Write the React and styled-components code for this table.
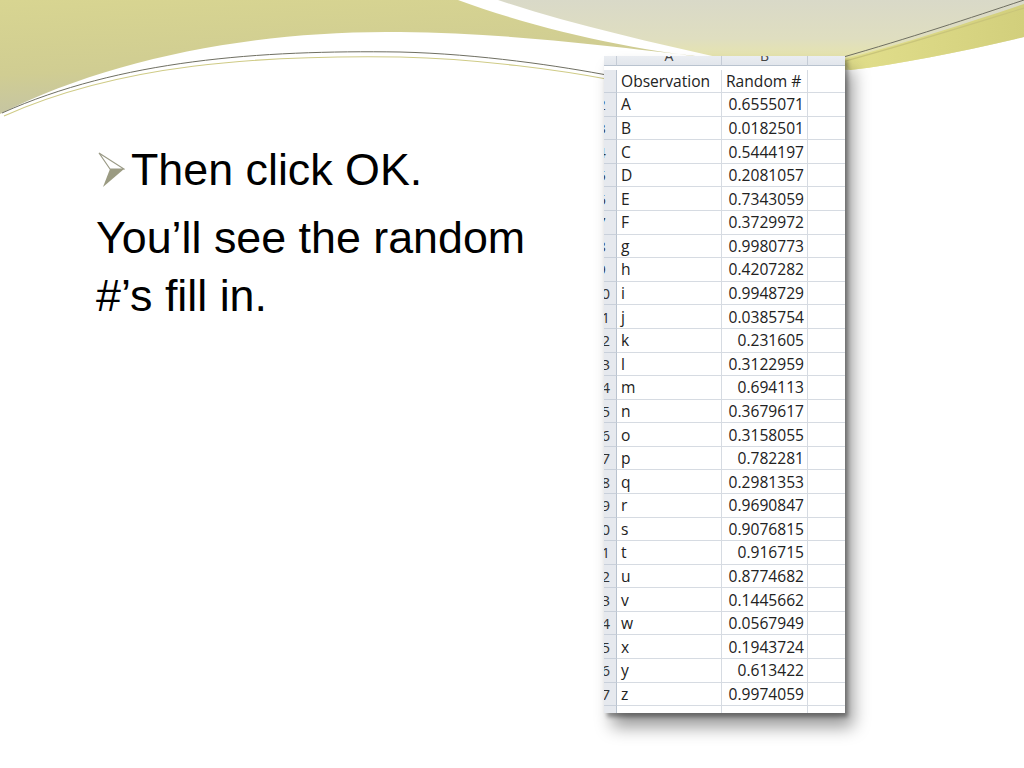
import React from 'react';
import styled, { createGlobalStyle } from 'styled-components';

const GlobalStyle = createGlobalStyle`
  body {
    margin: 0;
    background: #ffffff;
    font-family: "Liberation Sans", Arial, sans-serif;
  }
`;

// slide area, 1024x768
const Slide = styled.div`
  position: relative;
  width: 1024px;
  height: 768px;
  overflow: hidden;
  background: #ffffff;
`;

// decorative wave at the top of the slide (drawn, sits behind content)
const Backdrop = styled.svg`
  position: absolute;
  top: 0;
  left: 0;
  width: 1024px;
  height: 130px;
`;

const Content = styled.div`
  position: relative;
  z-index: 1;
  display: flex;
  height: 100%;
`;

const TextColumn = styled.div`
  flex: 0 0 604px;
  box-sizing: border-box;
  padding: 140px 0 0 96px;
  color: #000;
  font-size: 44.8px;
  line-height: 58px;
`;

const BulletLine = styled.div`
  display: flex;
  align-items: center;
`;

const Arrow = styled.svg`
  flex: 0 0 auto;
  width: 27px;
  height: 36px;
  margin: 2px 6px 0 2px;
`;

const Paragraph = styled.p`
  margin: 10px 0 0;
  width: 470px;
`;

const SheetColumn = styled.div`
  padding-top: 56px;
`;

// the pasted spreadsheet picture
const SheetFrame = styled.div`
  width: 241px;
  height: 657px;
  overflow: hidden;
  background: #ffffff;
  box-shadow: 8px 14px 16px rgba(0, 0, 0, 0.4), 3px 4px 4px rgba(0, 0, 0, 0.35);
`;

const Grid = styled.div`
  display: grid;
  grid-template-columns: 30px 105px 86px 64px;
  grid-auto-rows: 23.58px;
  margin: -10px 0 0 -17px;
  font-family: "Open Sans", "DejaVu Sans", sans-serif;
  font-size: 15.6px;
  color: #222;
`;

const ColHead = styled.div`
  height: 20px;
  box-sizing: border-box;
  display: flex;
  align-items: center;
  justify-content: center;
  background: linear-gradient(#f3f5f8, #e2e6ec);
  border-right: 1px solid #c5ccd6;
  border-bottom: 1px solid #b9c3cf;
  font-size: 14px;
  color: #444;
`;

const RowHead = styled.div`
  box-sizing: border-box;
  display: flex;
  align-items: center;
  justify-content: center;
  background: #e6e9ee;
  border-right: 1px solid #b9c3cf;
  border-bottom: 1px solid #c9d0da;
  font-size: 15px;
  color: #333;
`;

const Cell = styled.div`
  box-sizing: border-box;
  display: flex;
  align-items: center;
  justify-content: ${p => (p.$num ? 'flex-end' : 'flex-start')};
  padding: 0 ${p => (p.$num ? '3px' : '0')} 0 ${p => (p.$num ? '0' : '4px')};
  border-right: 1px solid #d6dbe2;
  border-bottom: 1px solid #d6dbe2;
  white-space: nowrap;
`;

const rows = [
  ['A', '0.6555071'], ['B', '0.0182501'], ['C', '0.5444197'], ['D', '0.2081057'],
  ['E', '0.7343059'], ['F', '0.3729972'], ['g', '0.9980773'], ['h', '0.4207282'],
  ['i', '0.9948729'], ['j', '0.0385754'], ['k', '0.231605'], ['l', '0.3122959'],
  ['m', '0.694113'], ['n', '0.3679617'], ['o', '0.3158055'], ['p', '0.782281'],
  ['q', '0.2981353'], ['r', '0.9690847'], ['s', '0.9076815'], ['t', '0.916715'],
  ['u', '0.8774682'], ['v', '0.1445662'], ['w', '0.0567949'], ['x', '0.1943724'],
  ['y', '0.613422'], ['z', '0.9974059'],
];

const App = () => {
  const allRows = [['Observation', 'Random #'], ...rows, ['', '']];

  return (
    <Slide>
      <GlobalStyle />
      <Backdrop viewBox="0 0 1024 130">
        <defs>
          <linearGradient id="olive" x1="0" y1="0" x2="0.3" y2="1">
            <stop offset="0" stopColor="#d8d591" />
            <stop offset="0.6" stopColor="#d0cd92" />
            <stop offset="1" stopColor="#c3c3a6" />
          </linearGradient>
          <linearGradient id="beige" x1="0" y1="0" x2="0" y2="1">
            <stop offset="0" stopColor="#d9d9c8" />
            <stop offset="0.55" stopColor="#dfdec0" />
            <stop offset="1" stopColor="#ebe8a0" />
          </linearGradient>
          <linearGradient id="yband" x1="0" y1="0" x2="1" y2="0">
            <stop offset="0" stopColor="#e2df8c" />
            <stop offset="1" stopColor="#d2cf7c" />
          </linearGradient>
        </defs>
        <path d="M0,0 H458 C540,30 640,52 730,60 C640,50 520,33 400,32 C260,30 110,58 0,114 Z" fill="url(#olive)" />
        <path d="M498,0 H1024 V37 C960,52 900,64 850,70 C800,68 770,64 730,60 C650,42 570,24 498,0 Z" fill="url(#beige)" />
        <path d="M840,60 C910,42 970,22 1024,4 V37 C960,52 900,64 850,70 Z" fill="url(#yband)" />
        <path d="M2,113 C120,60 260,50 400,52 C480,54 560,66 612,76" fill="none" stroke="#6f6f62" strokeWidth="1" />
        <path d="M4,116 C120,64 260,55 400,57 C480,59 560,70 612,80" fill="none" stroke="#cfcb86" strokeWidth="1.2" />
        <path d="M840,58 C910,38 970,18 1024,0" fill="none" stroke="#6f6f62" strokeWidth="1" />
        <path d="M842,62 C912,43 972,24 1024,8" fill="none" stroke="#c9c57a" strokeWidth="1.2" />
      </Backdrop>

      <Content>
        <TextColumn>
          <BulletLine>
            <Arrow viewBox="0 0 27 36">
              <polygon points="1,1 26,17 12,17" fill="#ffffff" stroke="#9a9a86" strokeWidth="1.2" />
              <polygon points="12,17 26,17 5,35" fill="#9b9b82" />
            </Arrow>
            <span>Then click OK.</span>
          </BulletLine>
          <Paragraph>You’ll see the random #’s fill in.</Paragraph>
        </TextColumn>

        <SheetColumn>
          <SheetFrame>
            <Grid>
              <ColHead />
              <ColHead>A</ColHead>
              <ColHead>B</ColHead>
              <ColHead />
              {allRows.map(([label, value], i) => (
                <React.Fragment key={i}>
                  <RowHead>{i + 1}</RowHead>
                  <Cell>{label}</Cell>
                  <Cell $num={i > 0}>{value}</Cell>
                  <Cell />
                </React.Fragment>
              ))}
            </Grid>
          </SheetFrame>
        </SheetColumn>
      </Content>
    </Slide>
  );
};

export default App;
